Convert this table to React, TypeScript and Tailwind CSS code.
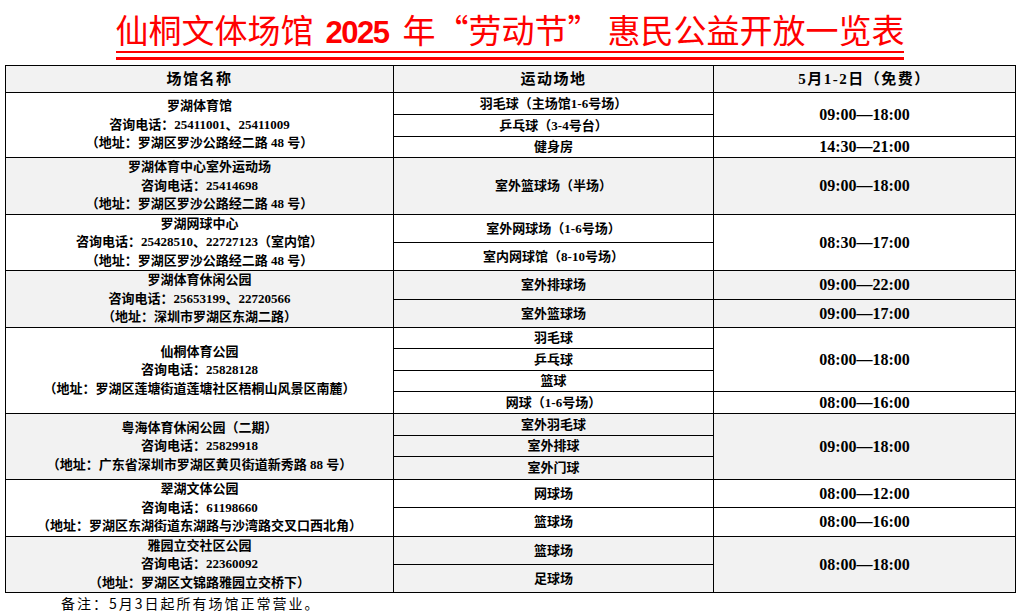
import React from 'react'

type Sub = { name: string; h: number; time?: string; span?: number }
type Group = { lines: string[]; gray?: boolean; subs: Sub[] }

const groups: Group[] = [
  {
    lines: ['罗湖体育馆', '咨询电话：25411001、25411009', '（地址：罗湖区罗沙公路经二路 48 号）'],
    subs: [
      { name: '羽毛球（主场馆1-6号场）', h: 22, time: '09:00—18:00', span: 2 },
      { name: '乒乓球（3-4号台）', h: 22 },
      { name: '健身房', h: 21, time: '14:30—21:00', span: 1 },
    ],
  },
  {
    lines: ['罗湖体育中心室外运动场', '咨询电话：25414698', '（地址：罗湖区罗沙公路经二路 48 号）'],
    gray: true,
    subs: [{ name: '室外篮球场（半场）', h: 57, time: '09:00—18:00', span: 1 }],
  },
  {
    lines: ['罗湖网球中心', '咨询电话：25428510、22727123（室内馆）', '（地址：罗湖区罗沙公路经二路 48 号）'],
    subs: [
      { name: '室外网球场（1-6号场）', h: 28, time: '08:30—17:00', span: 2 },
      { name: '室内网球馆（8-10号场）', h: 28 },
    ],
  },
  {
    lines: ['罗湖体育休闲公园', '咨询电话：25653199、22720566', '（地址：深圳市罗湖区东湖二路）'],
    gray: true,
    subs: [
      { name: '室外排球场', h: 29, time: '09:00—22:00', span: 1 },
      { name: '室外篮球场', h: 28, time: '09:00—17:00', span: 1 },
    ],
  },
  {
    lines: ['仙桐体育公园', '咨询电话：25828128', '（地址：罗湖区莲塘街道莲塘社区梧桐山风景区南麓）'],
    subs: [
      { name: '羽毛球', h: 21, time: '08:00—18:00', span: 3 },
      { name: '乒乓球', h: 22 },
      { name: '篮球', h: 21 },
      { name: '网球（1-6号场）', h: 22, time: '08:00—16:00', span: 1 },
    ],
  },
  {
    lines: ['粤海体育休闲公园（二期）', '咨询电话：25829918', '（地址：广东省深圳市罗湖区黄贝街道新秀路 88 号）'],
    gray: true,
    subs: [
      { name: '室外羽毛球', h: 22, time: '09:00—18:00', span: 3 },
      { name: '室外排球', h: 21 },
      { name: '室外门球', h: 23 },
    ],
  },
  {
    lines: ['翠湖文体公园', '咨询电话：61198660', '（地址：罗湖区东湖街道东湖路与沙湾路交叉口西北角）'],
    subs: [
      { name: '网球场', h: 28, time: '08:00—12:00', span: 1 },
      { name: '篮球场', h: 29, time: '08:00—16:00', span: 1 },
    ],
  },
  {
    lines: ['雅园立交社区公园', '咨询电话：22360092', '（地址：罗湖区文锦路雅园立交桥下）'],
    gray: true,
    subs: [
      { name: '篮球场', h: 28, time: '08:00—18:00', span: 2 },
      { name: '足球场', h: 28 },
    ],
  },
]

const cell = 'border border-black p-0 text-center align-middle'
const box = 'flex flex-col items-center justify-center overflow-visible whitespace-nowrap'

// height of the rows a cell covers, minus the 1px rule between rows
const spanHeight = (subs: Sub[], from: number, n: number) =>
  subs.slice(from, from + n).reduce((t, s) => t + s.h, 0) - 1

export default function App() {
  return (
    <div className="w-[1020px] h-[614px] overflow-hidden bg-white text-black">
      {/* title with double red underline */}
      <div className="h-[65px] flex justify-center pt-[12px]">
        <div className="inline-flex flex-col">
          <h1 className="flex items-baseline whitespace-nowrap text-[33px] leading-[34px] text-[#ff0000] font-['Noto_Sans_CJK_SC',sans-serif]">
            <span>仙桐文体场馆</span>
            <span className="ml-[12px] mr-[14px] text-[31px] tracking-[-1.5px] font-bold font-['Liberation_Sans',sans-serif]">2025</span>
            <span>年</span>
            <span className="inline-block w-[33px] text-right">“</span>
            <span>劳动节</span>
            <span className="inline-block w-[40px] text-left">”</span>
            <span>惠民公益开放一览表</span>
          </h1>
          <div className="mt-[1px] h-[2px] bg-[#ff0000]" />
          <div className="mt-[4px] h-[3px] bg-[#ff0000]" />
        </div>
      </div>

      <table className="ml-[5px] w-[1010px] table-fixed border-collapse border border-black font-['Liberation_Serif','Noto_Sans_CJK_SC',serif] font-bold text-[13px]">
        <colgroup>
          <col className="w-[388px]" />
          <col className="w-[320px]" />
          <col className="w-[302px]" />
        </colgroup>
        <thead>
          <tr className="bg-[#f2f2f2] text-[15px] tracking-[1.5px]">
            <th className={cell}>
              <div className={box + ' h-[26px]'}>场馆名称</div>
            </th>
            <th className={cell}>
              <div className={box + ' h-[26px]'}>运动场地</div>
            </th>
            <th className={cell}>
              <div className={box + ' h-[26px]'}>5月1-2日（免费）</div>
            </th>
          </tr>
        </thead>
        <tbody>
          {groups.map((g, gi) =>
            g.subs.map((s, si) => (
              <tr key={gi + '-' + si} className={g.gray ? 'bg-[#f2f2f2]' : 'bg-white'}>
                {si === 0 && (
                  <td rowSpan={g.subs.length} className={cell}>
                    <div className={box + ' leading-[18.5px]'} style={{ height: spanHeight(g.subs, 0, g.subs.length) }}>
                      {g.lines.map((l) => (
                        <div key={l}>{l}</div>
                      ))}
                    </div>
                  </td>
                )}
                <td className={cell}>
                  <div className={box + ' leading-[16px]'} style={{ height: s.h - 1 }}>
                    {s.name}
                  </div>
                </td>
                {s.time && (
                  <td rowSpan={s.span} className={cell}>
                    <div className={box + ' text-[16px] leading-[18px]'} style={{ height: spanHeight(g.subs, si, s.span ?? 1) }}>
                      {s.time}
                    </div>
                  </td>
                )}
              </tr>
            ))
          )}
        </tbody>
      </table>

      <p className="pl-[61px] pt-[1px] text-[14px] leading-[18px] tracking-[2px] font-['Noto_Sans_CJK_SC',sans-serif]">
        备注：5月3日起所有场馆正常营业。
      </p>
    </div>
  )
}
